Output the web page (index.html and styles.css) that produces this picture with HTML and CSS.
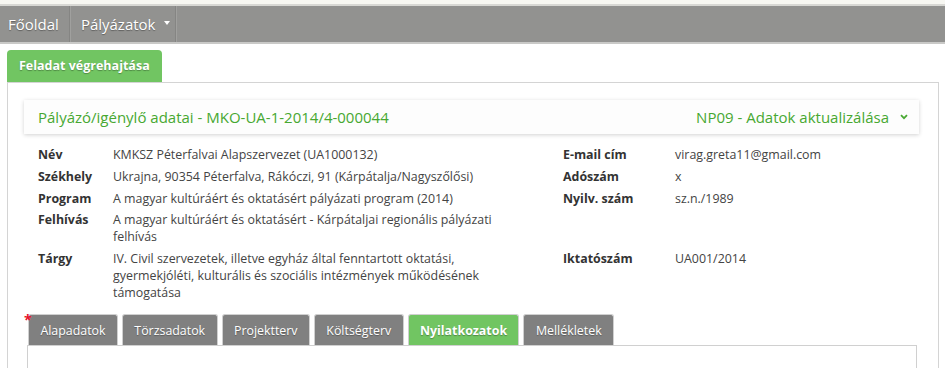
FILE: index.html
```html
<!DOCTYPE html>
<html lang="hu">
<head>
<meta charset="utf-8">
<title>Feladat végrehajtása</title>
<link rel="stylesheet" href="styles.css">
</head>
<body>
<div class="topstrip"></div>
<nav class="navbar">
  <a class="nav-item">Főoldal</a>
  <a class="nav-item nav-drop">Pályázatok <span class="caret"></span></a>
</nav>
<main class="main">
  <div class="tabbar">
    <div class="maintab">Feladat végrehajtása</div>
  </div>
  <div class="frame">
    <section class="panel">
      <header class="panel-head">
        <span class="ptitle">Pályázó/igénylő adatai - MKO-UA-1-2014/4-000044</span>
        <span class="pright">NP09 - Adatok aktualizálása
          <svg class="chev" width="8" height="6" viewBox="0 0 8 6"><path d="M1 1.2 L4 4.2 L7 1.2" fill="none" stroke="#4aa934" stroke-width="1.8"/></svg>
        </span>
      </header>
      <div class="panel-body">
        <div class="col col-left">
          <div class="row"><div class="lbl">Név</div><div class="val">KMKSZ Péterfalvai Alapszervezet (UA1000132)</div></div>
          <div class="row"><div class="lbl">Székhely</div><div class="val">Ukrajna, 90354 Péterfalva, Rákóczi, 91 (Kárpátalja/Nagyszőlősi)</div></div>
          <div class="row"><div class="lbl">Program</div><div class="val">A magyar kultúráért és oktatásért pályázati program (2014)</div></div>
          <div class="row"><div class="lbl">Felhívás</div><div class="val">A magyar kultúráért és oktatásért - Kárpátaljai regionális pályázati felhívás</div></div>
          <div class="row"><div class="lbl">Tárgy</div><div class="val">IV. Civil szervezetek, illetve egyház által fenntartott oktatási, gyermekjóléti, kulturális és szociális intézmények működésének támogatása</div></div>
        </div>
        <div class="col col-right">
          <div class="row"><div class="lbl">E-mail cím</div><div class="val">virag.greta11@gmail.com</div></div>
          <div class="row"><div class="lbl">Adószám</div><div class="val">x</div></div>
          <div class="row"><div class="lbl">Nyilv. szám</div><div class="val">sz.n./1989</div></div>
          <div class="row row-tall"><div class="lbl"></div><div class="val"></div></div>
          <div class="row"><div class="lbl">Iktatószám</div><div class="val">UA001/2014</div></div>
        </div>
      </div>
    </section>
    <div class="subtabs">
      <span class="req">*</span>
      <div class="subtab">Alapadatok</div>
      <div class="subtab">Törzsadatok</div>
      <div class="subtab">Projektterv</div>
      <div class="subtab">Költségterv</div>
      <div class="subtab active">Nyilatkozatok</div>
      <div class="subtab">Mellékletek</div>
    </div>
    <div class="subcontent"></div>
  </div>
</main>
</body>
</html>
```
FILE: styles.css
```css
* { box-sizing: border-box; }
html, body { margin: 0; padding: 0; background: #fff; }
body {
  font-family: "Open Sans", "DejaVu Sans", sans-serif;
  color: #333;
  height: 368px;
  overflow: hidden;
}
.topstrip {
  height: 4px;
  background: #f7f7f2;
  border-bottom: 2px solid #d8d8d4;
  box-sizing: content-box;
}
.navbar {
  height: 36px;
  background: #929290;
  border-bottom: 2px solid #c9c9c7;
  box-sizing: content-box;
  display: flex;
  align-items: stretch;
}
.nav-item {
  display: flex;
  align-items: center;
  padding: 0 10px 0 8px;
  color: #fff;
  font-size: 15px;
  text-shadow: 0 1px 1px rgba(0,0,0,.35);
  border-right: 1px solid #858583;
  box-shadow: 1px 0 0 #a0a09e;
}
.nav-drop { padding: 0 5px 0 11px; }
.caret {
  display: inline-block;
  width: 0; height: 0;
  margin-left: 8px;
  border-left: 3.5px solid transparent;
  border-right: 3.5px solid transparent;
  border-top: 4px solid #fff;
  position: relative;
  top: -1px;
}
.main { padding: 6px 6px 0 7px; }
.tabbar {
  display: flex;
  border-bottom: 1px solid #d4d4d4;
}
.maintab {
  background: #71c562;
  color: #fff;
  font-weight: 700;
  font-size: 12.5px;
  height: 32px;
  line-height: 32px;
  padding: 0 12px;
  width: 155px;
  border-radius: 4px 4px 0 0;
  text-shadow: 0 1px 1px rgba(0,0,0,.3);
}
.frame {
  border-left: 1px solid #d4d4d4;
  border-right: 1px solid #d4d4d4;
  padding: 17px 19px 0 16px;
  height: 286px;
  overflow: hidden;
}
.panel-head {
  height: 34px;
  display: flex;
  align-items: center;
  justify-content: space-between;
  padding: 0 11px 0 14px;
  background: #fdfdfd;
  box-shadow: 0 1px 4px rgba(0,0,0,.18);
  color: #47a831;
  font-size: 15px;
}
.pright { display: flex; align-items: center; }
.chev { margin-left: 11px; }
.panel-body {
  display: flex;
  padding: 12px 0 0 14px;
}
.col-left { width: 525px; }
.col-right { flex: 1; }
.row {
  display: flex;
  font-size: 12.4px;
  line-height: 17px;
  margin-bottom: 4.8px;
}
.row-tall { height: 34px; }
.lbl { font-weight: 700; color: #333; flex: none; }
.col-left .lbl { width: 75px; }
.col-right .lbl { width: 112px; }
.val { color: #444; }
.col-left .val { width: 380px; }
.subtabs {
  display: flex;
  align-items: flex-end;
  gap: 4px;
  margin-top: 8px;
  position: relative;
  padding-left: 4px;
}
.req {
  position: absolute;
  left: 0; top: -4px;
  color: #e8122a;
  font-size: 14px;
  font-weight: 700;
}
.subtab {
  background: #808080;
  color: #fff;
  font-size: 12.4px;
  height: 31px;
  line-height: 31px;
  padding: 0 11.4px;
  border: 1px solid #d0d0d0;
  border-bottom: none;
  border-radius: 3px 3px 0 0;
  text-shadow: 0 1px 1px rgba(0,0,0,.3);
}
.subtab.active {
  background: #71c562;
  font-weight: 700;
}
.subcontent {
  margin-left: 3px;
  margin-right: 2px;
  border: 1px solid #d0d0d0;
  height: 40px;
}
```
